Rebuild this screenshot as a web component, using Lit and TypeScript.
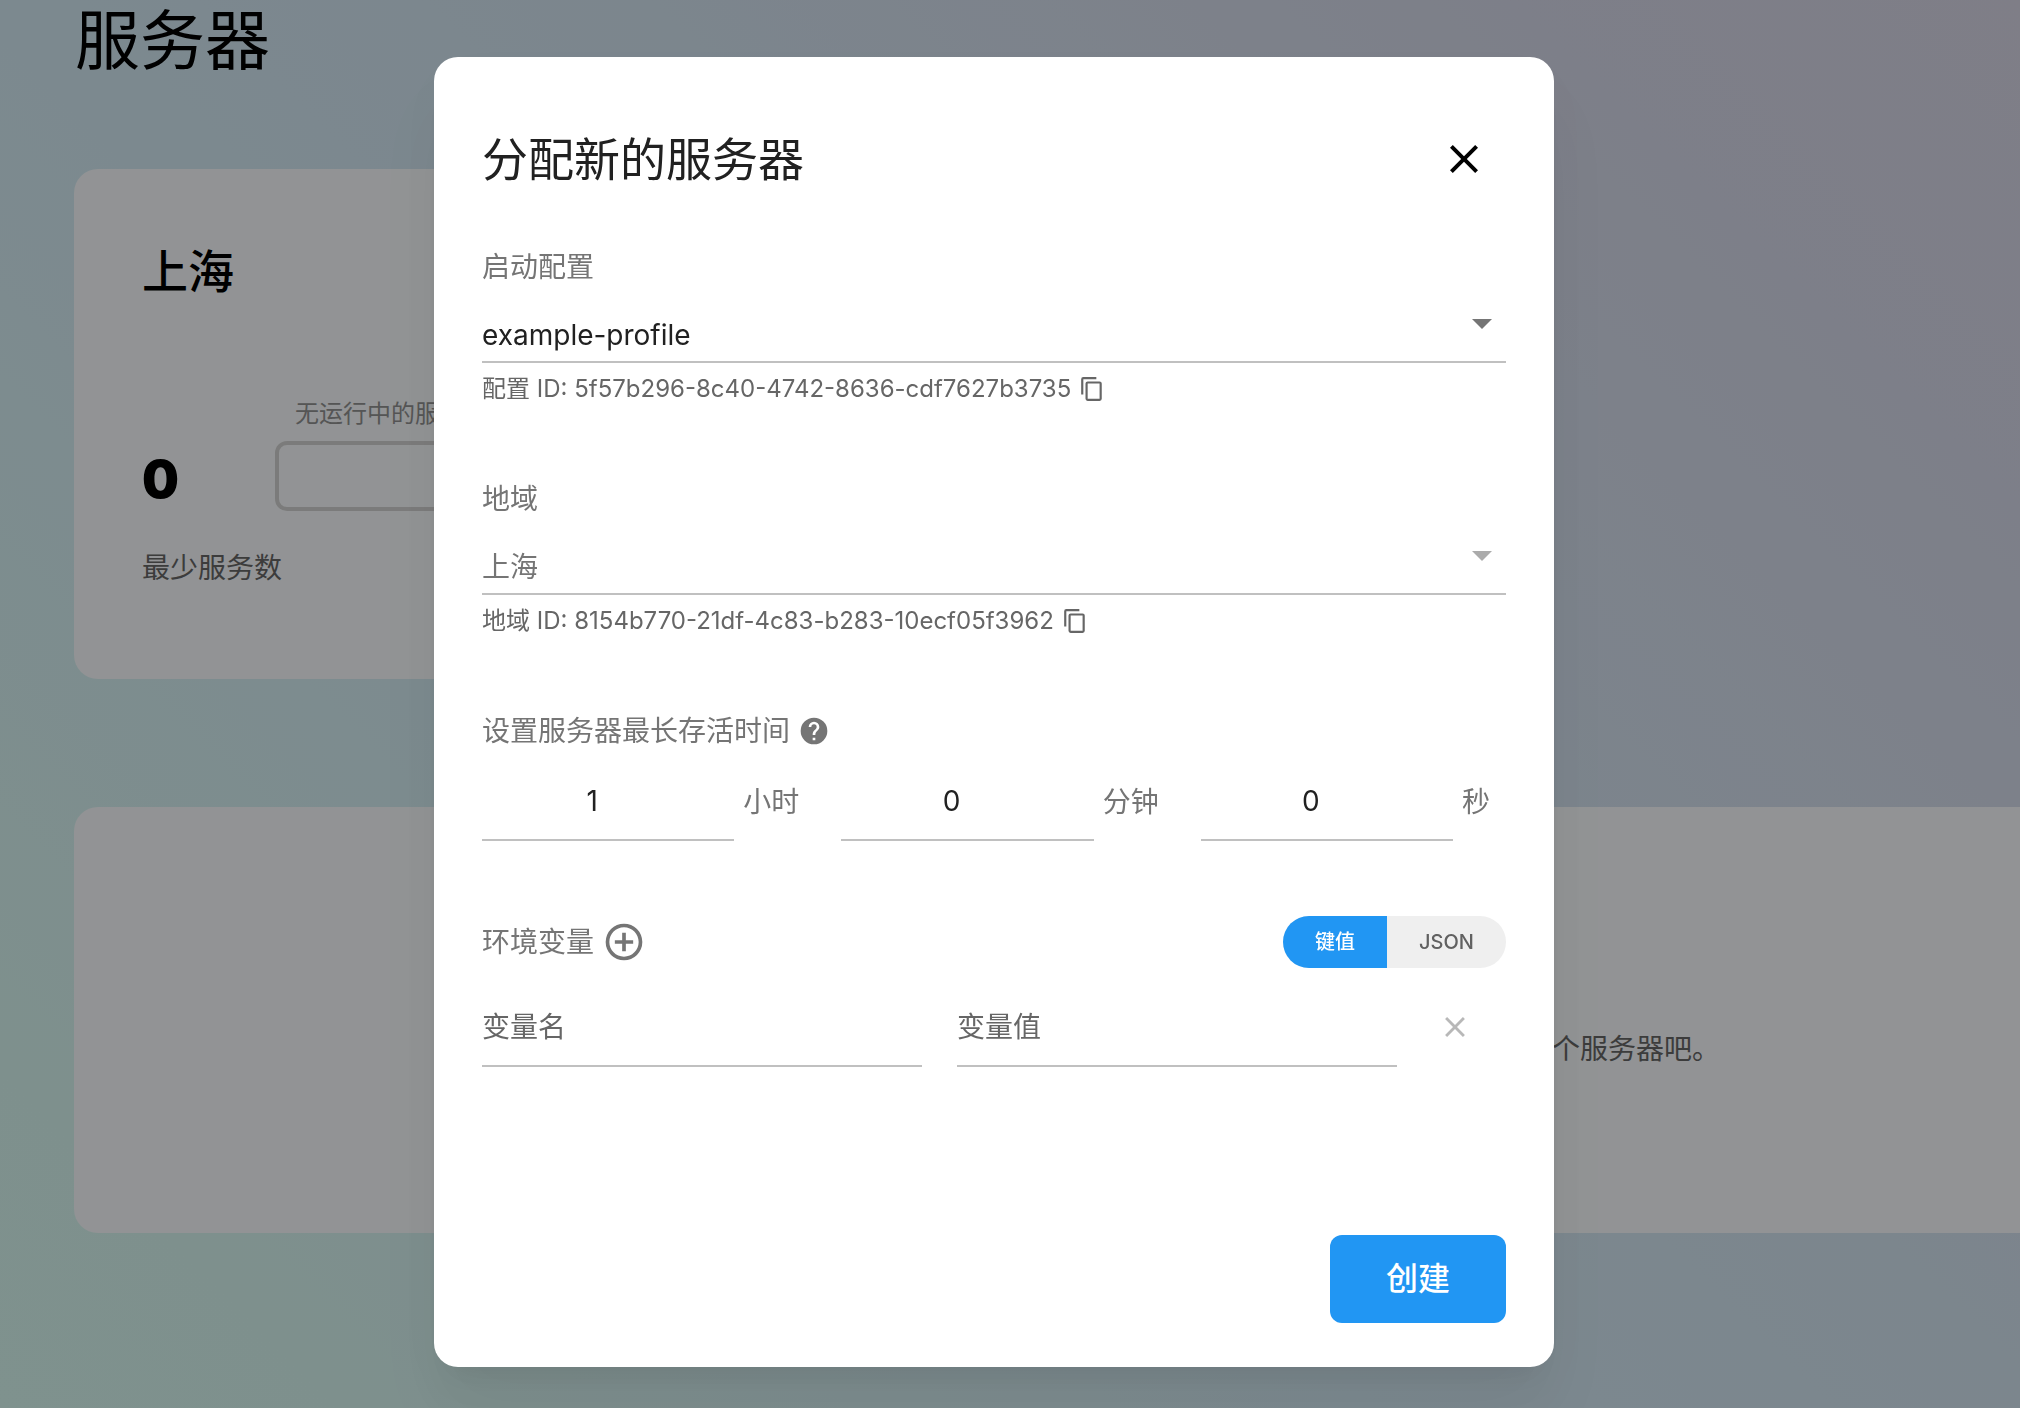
import { LitElement, html, css, svg } from "lit";
import { customElement, property, state } from "lit/decorators.js";

const paths = {
  close:
    "M19 6.41L17.59 5L12 10.59L6.41 5L5 6.41L10.59 12L5 17.59L6.41 19L12 13.41L17.59 19L19 17.59L13.41 12L19 6.41Z",
  copy:
    "M19 21H8V7H19M19 5H8A2 2 0 0 0 6 7V21A2 2 0 0 0 8 23H19A2 2 0 0 0 21 21V7A2 2 0 0 0 19 5M16 1H4A2 2 0 0 0 2 3V17H4V3H16V1Z",
  help:
    "M15.07 11.25L14.17 12.17C13.45 12.89 13 13.5 13 15H11V14.5C11 13.39 11.45 12.39 12.17 11.67L13.41 10.41C13.78 10.05 14 9.55 14 9A2 2 0 0 0 12 7A2 2 0 0 0 10 9H8A4 4 0 0 1 12 5A4 4 0 0 1 16 9C16 9.88 15.64 10.67 15.07 11.25M13 19H11V17H13M12 2A10 10 0 0 0 2 12A10 10 0 0 0 12 22A10 10 0 0 0 22 12A10 10 0 0 0 12 2Z",
  plus:
    "M12 20C7.59 20 4 16.41 4 12S7.59 4 12 4 20 7.59 20 12 16.41 20 12 20M12 2A10 10 0 0 0 2 12A10 10 0 0 0 12 22A10 10 0 0 0 22 12A10 10 0 0 0 12 2M13 7H11V11H7V13H11V17H13V13H17V11H13V7Z",
  down: "M7 10L12 15L17 10H7Z",
};

type IconName = keyof typeof paths;

@customElement("mdi-icon")
export class MdiIcon extends LitElement {
  static styles = css`
    :host {
      display: block;
      flex: none;
      width: 24px;
      height: 24px;
    }
    .glyph {
      display: block;
      width: 100%;
      height: 100%;
      fill: currentColor;
    }
  `;

  @property() name: IconName = "close";

  render() {
    return html`<svg class="glyph" viewBox="0 0 24 24" aria-hidden="true">
      ${svg`<path d=${paths[this.name]}></path>`}
    </svg>`;
  }
}

@customElement("server-page")
export class ServerPage extends LitElement {
  static styles = css`
    :host {
      display: block;
      padding-left: 74px;
      color: #000;
    }
    .heading {
      margin: 0;
      padding: 0 0 88px 1px;
      font-size: 65px;
      line-height: 81px;
      font-weight: 400;
    }
    .card {
      box-sizing: border-box;
      background: #f3f6f8;
      border-radius: 24px;
    }
    .region {
      max-width: 1200px;
      padding: 70px 68px 91px;
    }
    .region-name {
      margin: 0;
      font-size: 46px;
      line-height: 64px;
      font-weight: 500;
    }
    .usage {
      display: flex;
      align-items: flex-end;
      margin-top: 95px;
    }
    .count {
      flex: 0 0 133px;
      font-size: 52px;
      line-height: 62px;
      font-weight: 900;
    }
    .meter {
      flex: 1;
    }
    .meter-note {
      padding-left: 20px;
      font-size: 24px;
      line-height: 32px;
      color: #8e8e8e;
    }
    .meter-bar {
      height: 62px;
      margin-top: 11px;
      border: 4px solid #cecece;
      border-radius: 12px;
    }
    .caption {
      margin-top: 37px;
      font-size: 28px;
      line-height: 40px;
      color: #646464;
    }
    .empty {
      margin-top: 128px;
      padding: 222px 300px 164px 68px;
      border-radius: 24px 0 0 24px;
      font-size: 28px;
      line-height: 40px;
      text-align: right;
      color: #646464;
    }
  `;

  render() {
    return html`
      <h1 class="heading">服务器</h1>
      <section class="card region">
        <h2 class="region-name">上海</h2>
        <div class="usage">
          <div class="count">0</div>
          <div class="meter">
            <div class="meter-note">无运行中的服务器</div>
            <div class="meter-bar"></div>
          </div>
        </div>
        <div class="caption">最少服务数</div>
      </section>
      <section class="card empty">个服务器吧。</section>
    `;
  }
}

@customElement("allocate-dialog")
export class AllocateDialog extends LitElement {
  static styles = css`
    :host {
      display: block;
      box-sizing: border-box;
      width: 100%;
      max-width: 1120px;
      padding: 78px 48px 44px;
      border-radius: 24px;
      background: #fff;
      color: #212121;
      font-size: 28px;
      line-height: 40px;
      box-shadow:
        0 22px 30px -14px rgba(0, 0, 0, 0.06),
        0 48px 76px 6px rgba(0, 0, 0, 0.05),
        0 18px 56px 4px rgba(0, 0, 0, 0.03);
    }
    button,
    input,
    select {
      margin: 0;
      padding: 0;
      border: 0;
      border-radius: 0;
      background: none;
      color: inherit;
      font: inherit;
      outline: none;
    }
    button {
      cursor: pointer;
    }
    .head {
      display: flex;
      align-items: center;
      justify-content: space-between;
      padding-right: 18px;
    }
    .title {
      margin: 0;
      font-size: 46px;
      line-height: 48px;
      font-weight: 400;
    }
    .close {
      color: #000;
    }
    .close mdi-icon {
      width: 48px;
      height: 48px;
    }
    .field {
      margin-top: 74px;
    }
    .field.first {
      margin-top: 64px;
    }
    .label {
      display: block;
      color: #757575;
    }
    .picker {
      position: relative;
    }
    .select {
      display: block;
      box-sizing: border-box;
      width: 100%;
      height: 76px;
      padding: 22px 48px 0 0;
      border-bottom: 2px solid #c0c0c0;
      appearance: none;
      opacity: 1;
    }
    .select:disabled {
      color: #757575;
    }
    .arrow {
      position: absolute;
      top: 12px;
      right: 0;
      width: 48px;
      height: 48px;
      color: #757575;
      pointer-events: none;
    }
    .select:disabled + .arrow {
      color: #ababab;
    }
    .hint {
      display: flex;
      align-items: center;
      gap: 8px;
      margin-top: 10px;
      font-size: 24px;
      line-height: 32px;
      color: #666;
    }
    .hint mdi-icon {
      width: 26px;
      height: 26px;
    }
    .inline {
      display: flex;
      align-items: center;
      gap: 8px;
      color: #757575;
    }
    .help mdi-icon {
      width: 32px;
      height: 32px;
    }
    .add mdi-icon {
      width: 44px;
      height: 44px;
    }
    .times {
      display: grid;
      grid-template-columns: repeat(3, 1fr);
      margin: 12px -54px 0 0;
    }
    .time {
      display: flex;
      align-items: center;
      gap: 9px;
      color: #757575;
    }
    .unit {
      flex: 0 0 98px;
    }
    .text {
      box-sizing: border-box;
      flex: 1;
      width: 0;
      min-width: 0;
      height: 78px;
      border-bottom: 2px solid #c0c0c0;
      color: #212121;
    }
    .text::placeholder {
      color: #666;
      opacity: 1;
    }
    .number {
      padding-right: 32px;
      text-align: center;
      appearance: textfield;
    }
    .number::-webkit-inner-spin-button {
      appearance: none;
      margin: 0;
    }
    .env {
      display: flex;
      align-items: center;
      justify-content: space-between;
      margin-top: 75px;
    }
    .toggle {
      display: flex;
      overflow: hidden;
      border-radius: 26px;
      background: #efefef;
    }
    .mode {
      padding: 0 32px;
      font-size: 20px;
      line-height: 52px;
      font-weight: 500;
      color: #616161;
    }
    .mode[aria-pressed="true"] {
      background: #2196f3;
      color: #fff;
    }
    .pair {
      display: flex;
      align-items: center;
      gap: 35px;
      margin-top: 21px;
    }
    .remove {
      display: flex;
      flex: 0 0 74px;
      padding: 0 0 2px 6px;
      color: #b8b8b8;
    }
    .remove mdi-icon {
      width: 34px;
      height: 34px;
    }
    .foot {
      display: flex;
      justify-content: flex-end;
      margin-top: 168px;
    }
    .submit {
      padding: 0 56px;
      border-radius: 12px;
      background: #2196f3;
      color: #fff;
      font-size: 32px;
      line-height: 88px;
      font-weight: 500;
    }
  `;

  @state() private mode = "键值";

  private times = [
    { id: "hours", unit: "小时", value: 1 },
    { id: "minutes", unit: "分钟", value: 0 },
    { id: "seconds", unit: "秒", value: 0 },
  ];

  private renderPicker(
    id: string,
    label: string,
    value: string,
    hint: string,
    first: boolean,
    disabled: boolean
  ) {
    return html`
      <div class=${first ? "field first" : "field"}>
        <label class="label" for=${id}>${label}</label>
        <div class="picker">
          <select class="select" id=${id} ?disabled=${disabled}>
            <option>${value}</option>
          </select>
          <mdi-icon class="arrow" name="down"></mdi-icon>
        </div>
        <div class="hint">
          <span>${hint}</span>
          <button type="button" aria-label="复制">
            <mdi-icon name="copy"></mdi-icon>
          </button>
        </div>
      </div>
    `;
  }

  render() {
    return html`
      <header class="head">
        <h2 class="title">分配新的服务器</h2>
        <button class="close" type="button" aria-label="关闭">
          <mdi-icon name="close"></mdi-icon>
        </button>
      </header>

      ${this.renderPicker(
        "profile",
        "启动配置",
        "example-profile",
        "配置 ID: 5f57b296-8c40-4742-8636-cdf7627b3735",
        true,
        false
      )}
      ${this.renderPicker(
        "region",
        "地域",
        "上海",
        "地域 ID: 8154b770-21df-4c83-b283-10ecf05f3962",
        false,
        true
      )}

      <div class="field">
        <div class="inline">
          <span>设置服务器最长存活时间</span>
          <button class="help" type="button" aria-label="帮助">
            <mdi-icon name="help"></mdi-icon>
          </button>
        </div>
        <div class="times">
          ${this.times.map(
            (t) => html`
              <div class="time">
                <input class="text number" id=${t.id} type="number" min="0" .value=${String(t.value)} />
                <label class="unit" for=${t.id}>${t.unit}</label>
              </div>
            `
          )}
        </div>
      </div>

      <div class="env">
        <div class="inline">
          <span>环境变量</span>
          <button class="add" type="button" aria-label="添加">
            <mdi-icon name="plus"></mdi-icon>
          </button>
        </div>
        <div class="toggle" role="group">
          ${["键值", "JSON"].map(
            (m) => html`
              <button
                class="mode"
                type="button"
                aria-pressed=${this.mode === m ? "true" : "false"}
                @click=${() => (this.mode = m)}
              >${m}</button>
            `
          )}
        </div>
      </div>
      <div class="pair">
        <input class="text" type="text" placeholder="变量名" aria-label="变量名" />
        <input class="text" type="text" placeholder="变量值" aria-label="变量值" />
        <button class="remove" type="button" aria-label="删除">
          <mdi-icon name="close"></mdi-icon>
        </button>
      </div>

      <footer class="foot">
        <button class="submit" type="button">创建</button>
      </footer>
    `;
  }
}

@customElement("app-root")
export class AppRoot extends LitElement {
  static styles = css`
    :host {
      display: block;
      min-height: 100vh;
      background: linear-gradient(45deg, #d4f3ed 0%, #d3f1ec 10%, #cfe5ef 40%, #cfdfec 60%, #d1d4e4 85%, #d4d3e2 100%);
      font-family: Inter, "Noto Sans CJK SC", sans-serif;
    }
    .overlay {
      position: fixed;
      inset: 0;
      display: flex;
      align-items: center;
      justify-content: center;
      padding: 16px 32px 0 0;
      background: rgba(0, 0, 0, 0.4);
    }
  `;

  render() {
    return html`
      <server-page></server-page>
      <div class="overlay">
        <allocate-dialog role="dialog" aria-modal="true"></allocate-dialog>
      </div>
    `;
  }
}
